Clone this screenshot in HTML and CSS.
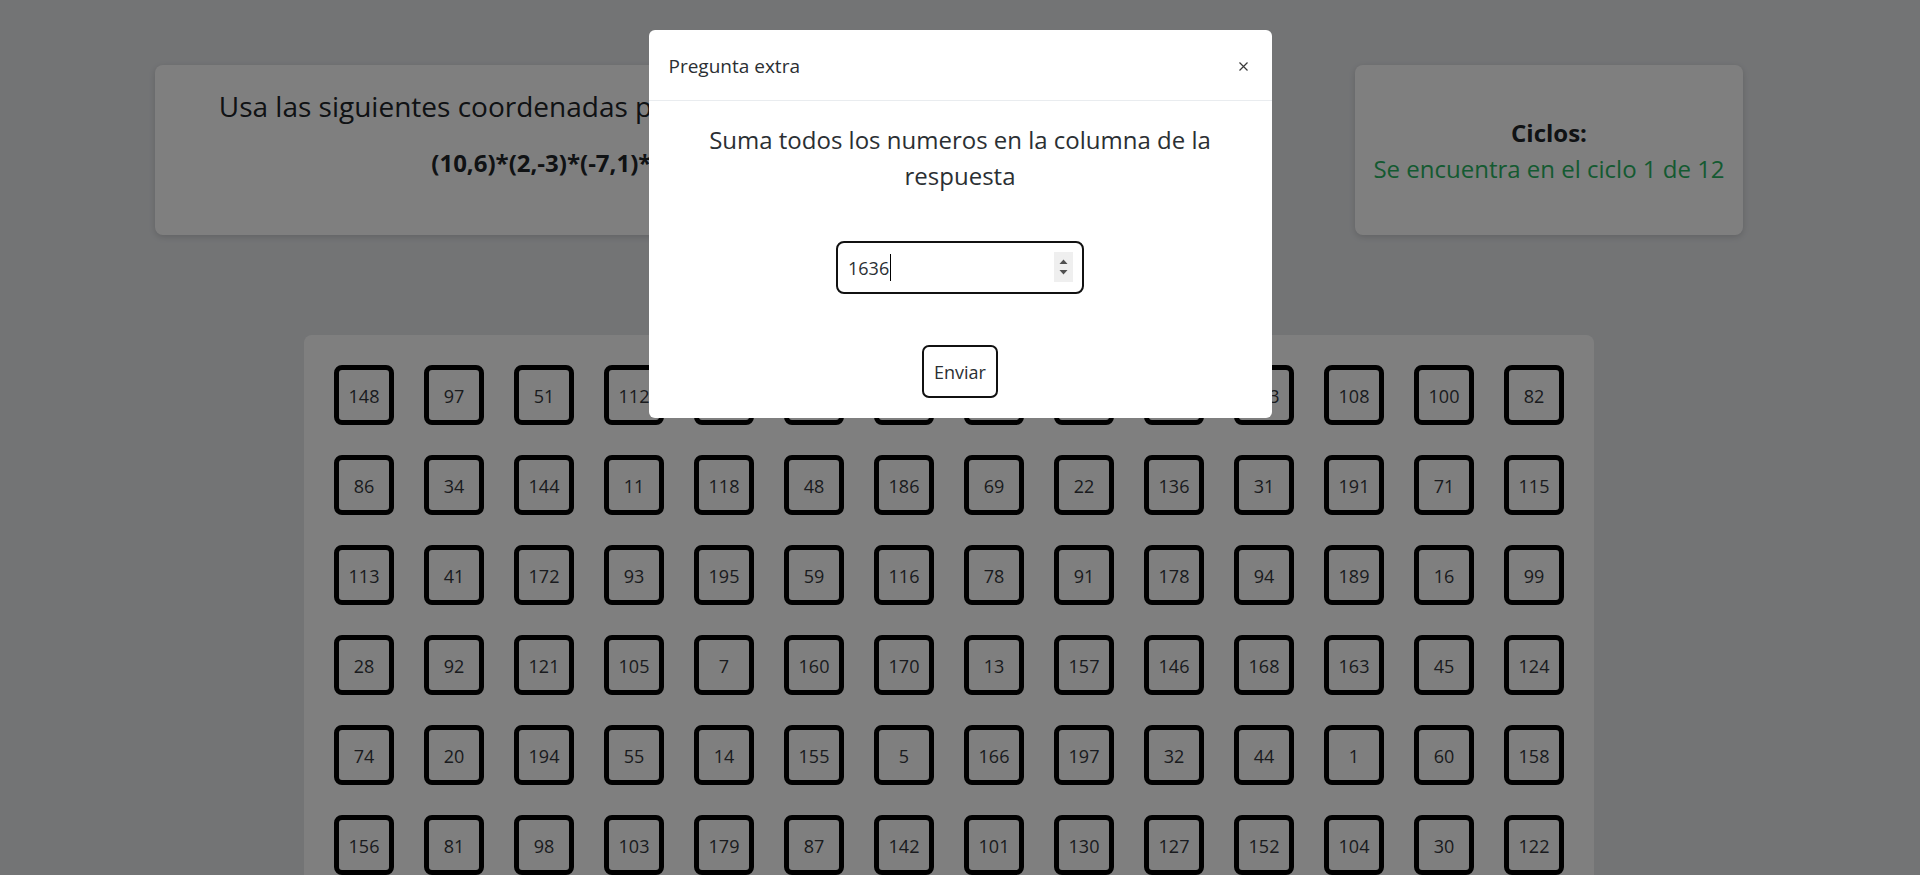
FILE: index.html
```html
<!DOCTYPE html>
<html lang="es">
<head>
<meta charset="utf-8">
<title>Pregunta extra</title>
<link rel="stylesheet" href="styles.css">
</head>
<body class="modal-open">
<main class="page">
  <section class="top-row">
    <div class="card card-main">
      <h3 class="prompt">Usa las siguientes coordenadas para encontrar las columnas correctas</h3>
      <p class="coords">(10,6)*(2,-3)*(-7,1)*(4,-8)*(-5,2)*(9,-4)*(3,-7)</p>
    </div>
    <div class="card card-cycles">
      <p class="cycles-label">Ciclos:</p>
      <p class="cycles-status">Se encuentra en el ciclo 1 de 12</p>
    </div>
  </section>

  <section class="board">
    <div class="cell">148</div><div class="cell">97</div><div class="cell">51</div><div class="cell">112</div><div class="cell">25</div><div class="cell">176</div><div class="cell">63</div><div class="cell">140</div><div class="cell">9</div><div class="cell">187</div><div class="cell">133</div><div class="cell">108</div><div class="cell">100</div><div class="cell">82</div>
    <div class="cell">86</div><div class="cell">34</div><div class="cell">144</div><div class="cell">11</div><div class="cell">118</div><div class="cell">48</div><div class="cell">186</div><div class="cell">69</div><div class="cell">22</div><div class="cell">136</div><div class="cell">31</div><div class="cell">191</div><div class="cell">71</div><div class="cell">115</div>
    <div class="cell">113</div><div class="cell">41</div><div class="cell">172</div><div class="cell">93</div><div class="cell">195</div><div class="cell">59</div><div class="cell">116</div><div class="cell">78</div><div class="cell">91</div><div class="cell">178</div><div class="cell">94</div><div class="cell">189</div><div class="cell">16</div><div class="cell">99</div>
    <div class="cell">28</div><div class="cell">92</div><div class="cell">121</div><div class="cell">105</div><div class="cell">7</div><div class="cell">160</div><div class="cell">170</div><div class="cell">13</div><div class="cell">157</div><div class="cell">146</div><div class="cell">168</div><div class="cell">163</div><div class="cell">45</div><div class="cell">124</div>
    <div class="cell">74</div><div class="cell">20</div><div class="cell">194</div><div class="cell">55</div><div class="cell">14</div><div class="cell">155</div><div class="cell">5</div><div class="cell">166</div><div class="cell">197</div><div class="cell">32</div><div class="cell">44</div><div class="cell">1</div><div class="cell">60</div><div class="cell">158</div>
    <div class="cell">156</div><div class="cell">81</div><div class="cell">98</div><div class="cell">103</div><div class="cell">179</div><div class="cell">87</div><div class="cell">142</div><div class="cell">101</div><div class="cell">130</div><div class="cell">127</div><div class="cell">152</div><div class="cell">104</div><div class="cell">30</div><div class="cell">122</div>
  </section>
</main>

<div class="backdrop"></div>

<div class="modal">
  <div class="modal-dialog">
    <div class="modal-content">
      <div class="modal-header">
        <h5 class="modal-title">Pregunta extra</h5>
        <button class="close" type="button" aria-label="Cerrar">
          <svg width="9" height="9" viewBox="0 0 9 9"><path d="M0.5 0.5 L8.5 8.5 M8.5 0.5 L0.5 8.5" stroke="#3a3a3a" stroke-width="1.2" fill="none"/></svg>
        </button>
      </div>
      <div class="modal-body">
        <p class="question">Suma todos los numeros en la columna de la respuesta</p>
        <div class="num-field">
          <input class="num-input" type="number" value="1636">
          <span class="caret" aria-hidden="true"></span>
          <span class="spin" aria-hidden="true">
            <svg width="19" height="30" viewBox="0 0 19 30"><rect width="19" height="30" fill="#efefef"/><polygon points="9.5,7.5 13.5,12 5.5,12" fill="#505050"/><polygon points="5.5,18 13.5,18 9.5,22.5" fill="#505050"/></svg>
          </span>
        </div>
        <button class="submit" type="button">Enviar</button>
      </div>
    </div>
  </div>
</div>
</body>
</html>
```

FILE: styles.css
```css
* { box-sizing: border-box; }

html, body {
  margin: 0;
  height: 100%;
}

body {
  font-family: "Open Sans", "Noto Sans", sans-serif;
  color: #212529;
  background: #e6e8eb;
}

body.modal-open { overflow: hidden; }

.page {
  padding: 65px 22px 0 0;
}

.top-row {
  display: flex;
  justify-content: space-evenly;
}

.card {
  background: #ffffff;
  border-radius: 8px;
  box-shadow: 0 2px 6px rgba(0, 0, 0, 0.15);
  height: 170px;
}

.card-main {
  width: 1045px;
  padding: 24px 24px 0;
  text-align: center;
}

.prompt {
  margin: 0;
  font-size: 28px;
  line-height: 34px;
  font-weight: 400;
  white-space: nowrap;
}

.coords {
  margin: 22px 0 0;
  font-size: 24px;
  line-height: 36px;
  font-weight: 700;
}

.card-cycles {
  width: 388px;
  padding-top: 2px;
  display: flex;
  flex-direction: column;
  justify-content: center;
  align-items: center;
}

.cycles-label,
.cycles-status {
  margin: 0;
  font-size: 24px;
  line-height: 34px;
}

.cycles-label { font-weight: 700; }

.cycles-status {
  margin-top: 2px;
  color: #29b463;
}

.board {
  width: 1290px;
  margin: 100px auto 0;
  padding: 30px;
  background: #ffffff;
  border-radius: 8px;
  display: grid;
  grid-template-columns: repeat(14, 60px);
  grid-auto-rows: 60px;
  gap: 30px;
}

.cell {
  border: 5px solid #000;
  border-radius: 8px;
  display: flex;
  align-items: center;
  justify-content: center;
  padding-top: 2px;
  font-size: 18px;
  color: #34373c;
}

.backdrop {
  position: fixed;
  inset: 0;
  background: rgba(0, 0, 0, 0.5);
}

.modal {
  position: fixed;
  inset: 0;
}

.modal-dialog {
  width: 623px;
  margin: 30px auto 0;
}

.modal-content {
  background: #fff;
  border-radius: 6px;
}

.modal-header {
  display: flex;
  align-items: center;
  justify-content: space-between;
  padding: 21px 24px 19px 20px;
  border-bottom: 1px solid #e9ecef;
}

.modal-title {
  margin: 0;
  font-size: 19px;
  line-height: 30px;
  font-weight: 400;
  color: #2b2f33;
}

.close {
  border: 0;
  background: none;
  padding: 0;
  width: 9px;
  height: 9px;
  display: flex;
  cursor: pointer;
}

.modal-body {
  padding: 21px 20px 20px;
  display: flex;
  flex-direction: column;
  align-items: center;
}

.question {
  margin: 0;
  font-size: 24px;
  line-height: 36px;
  text-align: center;
  color: #2b2f33;
}

.num-field {
  position: relative;
  width: 248px;
  margin-top: 47px;
}

.num-input {
  display: block;
  width: 100%;
  height: 53px;
  border: 2px solid #111;
  border-radius: 8px;
  padding: 1px 10px 0;
  font-family: inherit;
  font-size: 18px;
  color: #2b2f33;
  background: #fff;
  outline: none;
  -moz-appearance: textfield;
}

.num-input::-webkit-inner-spin-button,
.num-input::-webkit-outer-spin-button {
  -webkit-appearance: none;
  margin: 0;
}

.caret {
  position: absolute;
  left: 54px;
  top: 13px;
  width: 1px;
  height: 27px;
  background: #000;
}

.spin {
  position: absolute;
  top: 11px;
  right: 11px;
  display: flex;
}

.submit {
  margin-top: 51px;
  width: 76px;
  height: 53px;
  border: 2px solid #111;
  border-radius: 7px;
  background: #fff;
  font-family: inherit;
  font-size: 18px;
  color: #2b2f33;
  padding: 1px 0 0;
}
```
